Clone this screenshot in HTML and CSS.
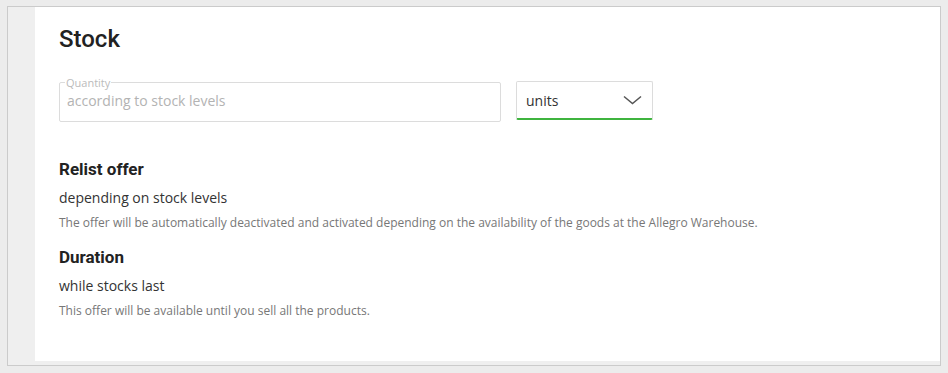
FILE: index.html
```html
<!DOCTYPE html>
<html lang="en">
<head>
    <meta charset="UTF-8">
    <meta name="viewport" content="width=device-width, initial-scale=1.0">
    <title>Stock</title>
    <link rel="stylesheet" href="styles.css">
</head>
<body>
    <div class="frame">
        <div class="card">
            <h1>Stock</h1>

            <div class="quantity-row">
                <fieldset class="quantity">
                    <legend>Quantity</legend>
                    <input type="text" placeholder="according to stock levels" disabled>
                </fieldset>
                <div class="unit-select">
                    <span>units</span>
                    <svg class="chevron" width="19" height="10" viewBox="0 0 19 10">
                        <path d="M1 1.5 L9.5 8.5 L18 1.5" fill="none" stroke="#555" stroke-width="1.5"/>
                    </svg>
                </div>
            </div>

            <div class="option">
                <h2>Relist offer</h2>
                <p class="value">depending on stock levels</p>
                <p class="note">The offer will be automatically deactivated and activated depending on the availability of the goods at the Allegro Warehouse.</p>
            </div>

            <div class="option">
                <h2>Duration</h2>
                <p class="value">while stocks last</p>
                <p class="note">This offer will be available until you sell all the products.</p>
            </div>
        </div>
    </div>
</body>
</html>
```

FILE: styles.css
```css
body {
    margin: 0;
    padding: 6px 7px 7px 7px;
    background-color: #ececec;
    font-family: "Open Sans", Arial, sans-serif;
}
.frame {
    border: 1px solid #cbcbcb;
    background: #efefef;
    padding: 0 0 4px 27px;
    box-sizing: border-box;
    height: 360px;
}
.card {
    background: #fff;
    height: 100%;
    padding: 18px 24px 0 24px;
    box-sizing: border-box;
}
h1 {
    font-family: Roboto, Arial, sans-serif;
    font-weight: 500;
    font-size: 24px;
    color: #222;
    margin: 0 0 30px 0;
    line-height: 28px;
}
.quantity-row {
    display: flex;
    align-items: flex-start;
    gap: 15px;
}
.quantity {
    width: 442px;
    height: 46px;
    margin: -7px 0 0 0;
    padding: 0 7px;
    border: 1px solid #dcdcdc;
    border-radius: 2px;
    box-sizing: border-box;
}
.quantity legend {
    font-size: 11px;
    color: #bbb;
    padding: 0 1px;
    margin-left: -2px;
    line-height: 13px;
}
.quantity input {
    border: none;
    background: transparent;
    font-family: inherit;
    font-size: 14px;
    padding: 2px 0 0 0;
    width: 100%;
    outline: none;
}
.quantity input::placeholder {
    color: #b3b3b3;
}
.unit-select {
    width: 137px;
    height: 39px;
    margin-top: -2px;
    border: 1px solid #dcdcdc;
    border-bottom: 2px solid #3fb43f;
    border-radius: 2px;
    box-sizing: border-box;
    display: flex;
    align-items: center;
    justify-content: space-between;
    padding: 0 10px 0 9px;
    font-size: 14px;
    color: #333;
}
.chevron {
    display: block;
}
.option {
    margin-top: 37px;
}
.option + .option {
    margin-top: 16px;
}
h2 {
    font-family: Roboto, Arial, sans-serif;
    font-weight: 700;
    font-size: 17px;
    color: #222;
    margin: 0;
    line-height: 20px;
}
.value {
    margin: 9px 0 0 0;
    font-size: 14px;
    color: #333;
    line-height: 20px;
}
.note {
    margin: 7px 0 0 0;
    font-size: 12px;
    color: #777;
    line-height: 16px;
}
```
